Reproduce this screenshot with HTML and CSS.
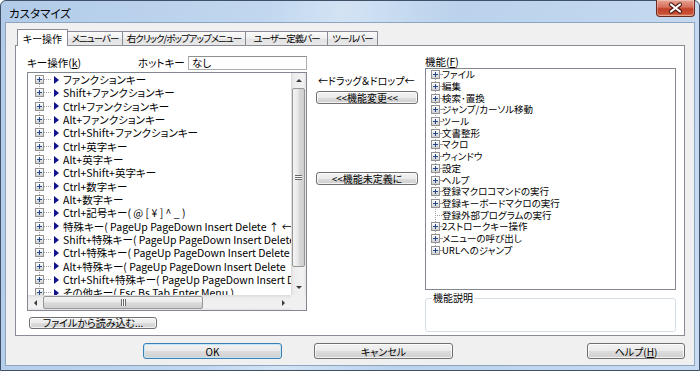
FILE: index.html
```html
<!DOCTYPE html>
<html lang="ja">
  <head>
    <meta charset="UTF-8" />
    <title>カスタマイズ</title>
    <link rel="stylesheet" href="styles.css">
  </head>
  <body>
    <div class="window">
      <div class="titlebar">
        <span class="title">カスタマイズ</span>
        <button class="close-btn" title="閉じる">
          <svg width="39" height="17" viewBox="0 0 39 17">
            <path d="M16 4.5 L25 11.5 M25 4.5 L16 11.5" stroke="#4a1a12" stroke-width="4.2" stroke-linecap="round" fill="none" />
            <path d="M16 4.5 L25 11.5 M25 4.5 L16 11.5" stroke="#fff" stroke-width="2.2" stroke-linecap="round" fill="none" />
          </svg>
        </button>
      </div>

      <div class="client">
        <div class="tabs">
          <div class="tab active">キー操作</div>
          <div class="tab tab-menu">メニューバー</div>
          <div class="tab tab-popup">右クリック/ポップアップメニュー</div>
          <div class="tab tab-user">ユーザー定義バー</div>
          <div class="tab tab-tool">ツールバー</div>
        </div>

        <div class="panel">
          <div class="col-left">
            <div class="hotkey-row">
              <span class="key-lbl">キー操作(<u>k</u>)</span>
              <span class="hotkey-lbl">ホットキー</span>
              <div class="textbox">なし</div>
            </div>

            <div class="listbox keys">
              <ul class="tree">
                <li><span class="exp"></span><span class="dots"></span><span class="tri"></span><span>ファンクションキー</span></li>
                <li><span class="exp"></span><span class="dots"></span><span class="tri"></span><span>Shift+ファンクションキー</span></li>
                <li><span class="exp"></span><span class="dots"></span><span class="tri"></span><span>Ctrl+ファンクションキー</span></li>
                <li><span class="exp"></span><span class="dots"></span><span class="tri"></span><span>Alt+ファンクションキー</span></li>
                <li><span class="exp"></span><span class="dots"></span><span class="tri"></span><span>Ctrl+Shift+ファンクションキー</span></li>
                <li><span class="exp"></span><span class="dots"></span><span class="tri"></span><span>Ctrl+英字キー</span></li>
                <li><span class="exp"></span><span class="dots"></span><span class="tri"></span><span>Alt+英字キー</span></li>
                <li><span class="exp"></span><span class="dots"></span><span class="tri"></span><span>Ctrl+Shift+英字キー</span></li>
                <li><span class="exp"></span><span class="dots"></span><span class="tri"></span><span>Ctrl+数字キー</span></li>
                <li><span class="exp"></span><span class="dots"></span><span class="tri"></span><span>Alt+数字キー</span></li>
                <li><span class="exp"></span><span class="dots"></span><span class="tri"></span><span>Ctrl+記号キー( @ [ ¥ ] ^ _ )</span></li>
                <li><span class="exp"></span><span class="dots"></span><span class="tri"></span><span>特殊キー( PageUp PageDown Insert Delete ↑ ← → ↓ Home End )</span></li>
                <li><span class="exp"></span><span class="dots"></span><span class="tri"></span><span>Shift+特殊キー( PageUp PageDown Insert Delete ↑ ← → ↓ Home End )</span></li>
                <li><span class="exp"></span><span class="dots"></span><span class="tri"></span><span>Ctrl+特殊キー( PageUp PageDown Insert Delete ↑ ← → ↓ Home End )</span></li>
                <li><span class="exp"></span><span class="dots"></span><span class="tri"></span><span>Alt+特殊キー( PageUp PageDown Insert Delete ↑ ← → ↓ Home End )</span></li>
                <li><span class="exp"></span><span class="dots"></span><span class="tri"></span><span>Ctrl+Shift+特殊キー( PageUp PageDown Insert Delete ↑ ← → ↓ Home End )</span></li>
                <li><span class="exp"></span><span class="dots"></span><span class="tri"></span><span>その他キー( Esc Bs Tab Enter Menu )</span></li>
              </ul>
              <div class="vscroll">
                <div class="arrow"><span class="arr-up"></span></div>
                <div class="track-v"><div class="thumb-v"><span class="grip-v"></span></div></div>
                <div class="arrow"><span class="arr-down"></span></div>
              </div>
              <div class="hscroll">
                <div class="arrow"><span class="arr-left"></span></div>
                <div class="track-h"><div class="thumb-h"><span class="grip-h"></span></div></div>
                <div class="arrow"><span class="arr-right"></span></div>
              </div>
              <div class="corner"></div>
            </div>

            <button class="btn file-btn">ファイルから読み込む...</button>
          </div>

          <div class="col-mid">
            <div class="dnd">←ドラッグ＆ドロップ←</div>
            <button class="btn mid-btn">&lt;&lt;機能変更&lt;&lt;</button>
            <button class="btn mid-btn undef">&lt;&lt;機能未定義に</button>
          </div>

          <div class="col-right">
            <div class="func-lbl">機能(<u>F</u>)</div>
            <div class="listbox funcs">
              <ul class="tree">
                <li><span class="exp"></span><span class="dots"></span>ファイル</li>
                <li><span class="exp"></span><span class="dots"></span>編集</li>
                <li><span class="exp"></span><span class="dots"></span>検索･置換</li>
                <li><span class="exp"></span><span class="dots"></span>ジャンプ/カーソル移動</li>
                <li><span class="exp"></span><span class="dots"></span>ツール</li>
                <li><span class="exp"></span><span class="dots"></span>文書整形</li>
                <li><span class="exp"></span><span class="dots"></span>マクロ</li>
                <li><span class="exp"></span><span class="dots"></span>ウィンドウ</li>
                <li><span class="exp"></span><span class="dots"></span>設定</li>
                <li><span class="exp"></span><span class="dots"></span>ヘルプ</li>
                <li><span class="exp"></span><span class="dots"></span>登録マクロコマンドの実行</li>
                <li><span class="exp"></span><span class="dots"></span>登録キーボードマクロの実行</li>
                <li class="leaf"><span class="dots"></span>登録外部プログラムの実行</li>
                <li><span class="exp"></span><span class="dots"></span>2ストロークキー操作</li>
                <li><span class="exp"></span><span class="dots"></span>メニューの呼び出し</li>
                <li><span class="exp"></span><span class="dots"></span>URLへのジャンプ</li>
              </ul>
            </div>
            <div class="groupbox">
              <span class="groupbox-title">機能説明</span>
            </div>
          </div>
        </div>

        <div class="footer">
          <button class="btn dlg-btn default">OK</button>
          <button class="btn dlg-btn cancel">キャンセル</button>
          <button class="btn dlg-btn help">ヘルプ(<u>H</u>)</button>
        </div>
      </div>
    </div>
  </body>
</html>
```

FILE: styles.css
```css
:root {
  --face: #f0f0f0;
  --list-border: #828790;
  --tree-line: #a0a0a0;
}
body {
  margin: 0;
  width: 700px;
  height: 371px;
  overflow: hidden;
  background: #fff;
  color: #000;
  font-family: "Noto Sans CJK JP", "Liberation Sans", sans-serif;
  font-size: 10.5px;
  font-feature-settings: "palt";
}
ul {
  list-style: none;
  margin: 0;
  padding: 0;
}
u {
  text-decoration: underline;
  text-underline-offset: 1px;
}

/* window frame */
.window {
  box-sizing: border-box;
  width: 700px;
  height: 371px;
  display: flex;
  flex-direction: column;
  padding: 0 4px 4px;
  border: 1px solid #3e5169;
  border-radius: 6px 6px 0 0;
  background: linear-gradient(100deg, #b1cbe8 0%, #c1d7ef 35%, #d3e3f4 45%, #bad2ec 60%, #c7dbf1 100%);
}
.titlebar {
  height: 21px;
  flex: none;
  display: flex;
  justify-content: space-between;
  align-items: flex-start;
}
.title {
  margin: 5px 0 0 4px;
  font-size: 11.5px;
  line-height: 14px;
}
.close-btn {
  width: 39px;
  height: 17px;
  margin-top: -1px;
  padding: 0;
  border: 1px solid #6b2a20;
  border-top: none;
  border-radius: 0 0 4px 4px;
  background: linear-gradient(#e8a493 0%, #d66e5b 45%, #c1402a 55%, #c94f35 85%, #dd8a6a 100%);
  box-shadow: inset 0 0 0 1px rgba(255, 255, 255, 0.3);
  display: flex;
  align-items: center;
  justify-content: center;
}
.close-btn svg {
  display: block;
  margin-left: -2px;
}

/* client area */
.client {
  flex: 1;
  display: flex;
  flex-direction: column;
  padding: 6px 9px 0;
  background: var(--face);
  border: 1px solid #8ea5c0;
}
.tabs {
  display: flex;
  align-items: flex-end;
  height: 16px;
  margin-left: 2px;
  position: relative;
  z-index: 1;
}
.tab {
  box-sizing: border-box;
  height: 14px;
  padding: 0;
  margin-left: -1px;
  line-height: 12px;
  font-size: 9.5px;
  letter-spacing: -1px;
  text-align: center;
  border: 1px solid #898c95;
  border-bottom: none;
  background: linear-gradient(#fbfbfb, #eeeeee 50%, #e2e2e2 51%, #e8e8e8);
  white-space: nowrap;
  overflow: hidden;
}
.tab:first-child {
  margin-left: 0;
}
.tab.active {
  width: 51px;
  height: 17px;
  margin-bottom: -1px;
  padding-top: 3px;
  font-size: 10px;
  letter-spacing: 0;
  background: #fff;
  position: relative;
  z-index: 2;
}
.tab-menu {
  width: 56px;
}
.tab-popup {
  width: 124px;
}
.tab-user {
  width: 83px;
}
.tab-tool {
  width: 51px;
}

.panel {
  box-sizing: border-box;
  height: 291px;
  flex: none;
  display: grid;
  grid-template-columns: 280px 118px 251px;
  padding: 10px 0 0 11px;
  background: #fff;
  border: 1px solid #898c95;
}

/* left column */
.col-left {
  display: flex;
  flex-direction: column;
}
.hotkey-row {
  display: flex;
  align-items: center;
  height: 14px;
  line-height: 12px;
}
.key-lbl {
  width: 111px;
}
.hotkey-lbl {
  width: 50px;
}
.textbox {
  flex: 1;
  box-sizing: border-box;
  height: 14px;
  padding: 0 3px;
  border: 1px solid #abadb3;
  border-top-color: #8e8f8f;
  line-height: 12px;
}
.listbox {
  box-sizing: border-box;
  border: 1px solid var(--list-border);
  background: #fff;
  overflow: hidden;
}
.listbox.keys {
  height: 239px;
  margin-top: 2px;
  display: grid;
  grid-template-columns: 1fr 15px;
  grid-template-rows: 1fr 15px;
}
.keys .tree {
  min-width: 0;
  overflow: hidden;
  white-space: nowrap;
  background: repeating-linear-gradient(to bottom, var(--tree-line) 0 1px, transparent 1px 2px) 11px 7px / 1px 100% no-repeat;
}
.keys .tree li {
  display: flex;
  align-items: center;
  height: 13.33px;
  line-height: 13px;
  padding-left: 7px;
}
.exp {
  flex: none;
  box-sizing: border-box;
  width: 9px;
  height: 9px;
  border: 1px solid #919191;
  background:
    linear-gradient(#26468a, #26468a) 1px 3px / 5px 1px no-repeat,
    linear-gradient(#26468a, #26468a) 3px 1px / 1px 5px no-repeat,
    linear-gradient(#ffffff, #cfcfcf);
}
.dots {
  flex: none;
  width: 7px;
  height: 0;
  border-top: 1px dotted var(--tree-line);
}
.tri {
  flex: none;
  width: 0;
  height: 0;
  margin: 0 4px 0 3px;
  border-left: 5px solid #12128a;
  border-top: 4px solid transparent;
  border-bottom: 4px solid transparent;
}

/* scrollbars */
.vscroll {
  display: grid;
  grid-template-rows: 15px 1fr 15px;
  background: linear-gradient(to right, #dcdcdc, #ededed 20%, #f2f2f2 80%, #e4e4e4);
}
.hscroll {
  display: grid;
  grid-template-columns: 15px 1fr 15px;
  background: linear-gradient(#dcdcdc, #ededed 20%, #f2f2f2 80%, #e4e4e4);
}
.corner {
  background: var(--face);
}
.arrow {
  display: flex;
  align-items: center;
  justify-content: center;
}
.arr-up,
.arr-down,
.arr-left,
.arr-right {
  width: 0;
  height: 0;
  border: 3px solid transparent;
}
.arr-up {
  border-bottom: 3px solid #3b3b3b;
  border-top-width: 0;
}
.arr-down {
  border-top: 3px solid #3b3b3b;
  border-bottom-width: 0;
}
.arr-left {
  border-right: 3px solid #3b3b3b;
  border-left-width: 0;
}
.arr-right {
  border-left: 3px solid #3b3b3b;
  border-right-width: 0;
}
.track-v {
  display: flex;
  flex-direction: column;
}
.thumb-v {
  box-sizing: border-box;
  height: 179px;
  margin: 0 1px;
  border: 1px solid #979797;
  border-radius: 2px;
  background: linear-gradient(to right, #f4f4f4, #e9e9e9 45%, #d9d9d9 55%, #cfcfcf);
  display: flex;
  align-items: center;
  justify-content: center;
}
.grip-v {
  width: 7px;
  height: 5px;
  background: repeating-linear-gradient(to bottom, #6a6a6a 0 1px, #fafafa 1px 2px);
}
.track-h {
  display: flex;
}
.thumb-h {
  box-sizing: border-box;
  width: 160px;
  margin: 1px 0;
  border: 1px solid #979797;
  border-radius: 2px;
  background: linear-gradient(#f4f4f4, #e9e9e9 45%, #d9d9d9 55%, #cfcfcf);
  display: flex;
  align-items: center;
  justify-content: center;
}
.grip-h {
  width: 5px;
  height: 7px;
  background: repeating-linear-gradient(to right, #6a6a6a 0 1px, #fafafa 1px 2px);
}

/* buttons */
.btn {
  box-sizing: border-box;
  padding: 0;
  border: 1px solid #707070;
  border-radius: 3px;
  background: linear-gradient(#f2f2f2 0%, #ebebeb 50%, #dddddd 51%, #cfcfcf 100%);
  box-shadow: inset 0 0 0 1px rgba(255, 255, 255, 0.75);
  color: #000;
  font-family: inherit;
  font-size: 10px;
  font-feature-settings: "palt";
  line-height: 10px;
  white-space: nowrap;
}
.file-btn {
  width: 128px;
  height: 12px;
  margin: 6px 0 0 2px;
}

/* middle column */
.col-mid {
  display: flex;
  flex-direction: column;
  margin: 0 7px 0 9px;
}
.dnd {
  margin-top: 19px;
  padding-left: 2px;
  line-height: 12px;
  font-size: 10px;
  white-space: nowrap;
}
.mid-btn {
  height: 13px;
  margin-top: 4px;
}
.mid-btn.undef {
  margin-top: 68px;
}

/* right column */
.col-right {
  display: flex;
  flex-direction: column;
}
.func-lbl {
  height: 12px;
  line-height: 12px;
}
.listbox.funcs {
  height: 222px;
}
.funcs .tree {
  font-size: 9.5px;
  white-space: nowrap;
  background: repeating-linear-gradient(to bottom, var(--tree-line) 0 1px, transparent 1px 2px) 9px 6px / 1px calc(100% - 11.7px) no-repeat;
}
.funcs .tree li {
  display: flex;
  align-items: center;
  height: 11.7px;
  line-height: 11px;
  padding-left: 5px;
}
.funcs .tree .dots {
  width: 2px;
}
.funcs .tree li.leaf {
  padding-left: 9px;
}
.funcs .tree li.leaf .dots {
  width: 7px;
}
.groupbox {
  box-sizing: border-box;
  height: 34px;
  margin-top: 8px;
  border: 1px solid #d5dfe5;
  border-radius: 3px;
  position: relative;
}
.groupbox-title {
  position: absolute;
  top: -7px;
  left: 6px;
  padding: 0 1px;
  background: #fff;
  font-size: 10px;
  line-height: 12px;
}

/* dialog buttons */
.footer {
  flex: 1;
  display: flex;
  align-items: flex-start;
  padding-top: 7px;
}
.dlg-btn {
  width: 139px;
  height: 16px;
  line-height: 13px;
}
.dlg-btn.default {
  margin-left: 128px;
  border-color: #3c7fb1;
  box-shadow: inset 0 0 0 1px #c4e5f6;
}
.dlg-btn.cancel {
  margin-left: 32px;
}
.dlg-btn.help {
  width: 98px;
  margin-left: auto;
}
```
